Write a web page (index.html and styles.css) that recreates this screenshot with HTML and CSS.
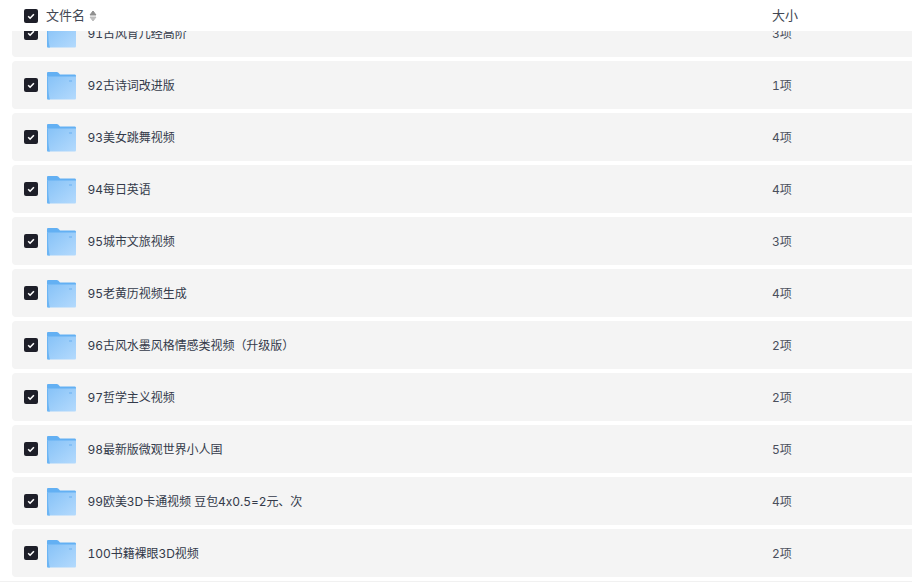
FILE: index.html
```html
<!DOCTYPE html>
<html lang="zh-CN">
<head>
<meta charset="utf-8">
<title>文件列表</title>
<link rel="stylesheet" href="styles.css">
</head>
<body>
<svg class="defs" width="0" height="0" aria-hidden="true">
  <defs>
    <linearGradient id="fg" x1="0" y1="0" x2="1" y2="1">
      <stop offset="0" stop-color="#86c2f7"/>
      <stop offset="1" stop-color="#b4dafd"/>
    </linearGradient>
    <symbol id="folder" viewBox="0 0 30 30">
      <path d="M1 3.2C1 2.5 1.5 2 2.2 2h8.6c.6 0 1 .2 1.4.6L14 4.4h14.6c.8 0 1.4.6 1.4 1.4V9H1z" fill="#63b0f3"/>
      <path d="M1 6.6h29v21.6c0 .7-.6 1.3-1.3 1.3H2.3c-.7 0-1.3-.6-1.3-1.3z" fill="url(#fg)"/>
      <path d="M1 7v21.2c0 .7.6 1.3 1.3 1.3H4C2.5 26 2 16 2 7z" fill="#6cb5f4"/>
      <rect x="23" y="10" width="3" height="2" fill="#84bff5"/>
    </symbol>
    <symbol id="check" viewBox="0 0 14 14">
      <rect width="14" height="14" rx="2" fill="#1e1f29"/>
      <path d="M4.2 7.3l1.9 1.9 3.8-4" fill="none" stroke="#fff" stroke-width="1.6"/>
    </symbol>
  </defs>
</svg>
<div class="page">
  <header class="head">
    <svg class="box"><use href="#check"/></svg>
    <span class="head-name">文件名</span>
    <svg class="sort" viewBox="0 0 8 12"><path d="M4 1L7 5H1z" fill="#8f8f8f" stroke="#8f8f8f" stroke-linejoin="round"/><path d="M4 11L1 7h6z" fill="#bdbdbd" stroke="#bdbdbd" stroke-linejoin="round"/></svg>
    <span class="head-size">大小</span>
  </header>
  <div class="viewport">
    <ul class="list">
      <li class="row"><svg class="box"><use href="#check"/></svg><svg class="folder"><use href="#folder"/></svg><span class="name">91古风育儿经高阶</span><span class="size">3项</span></li>
      <li class="row"><svg class="box"><use href="#check"/></svg><svg class="folder"><use href="#folder"/></svg><span class="name">92古诗词改进版</span><span class="size">1项</span></li>
      <li class="row"><svg class="box"><use href="#check"/></svg><svg class="folder"><use href="#folder"/></svg><span class="name">93美女跳舞视频</span><span class="size">4项</span></li>
      <li class="row"><svg class="box"><use href="#check"/></svg><svg class="folder"><use href="#folder"/></svg><span class="name">94每日英语</span><span class="size">4项</span></li>
      <li class="row"><svg class="box"><use href="#check"/></svg><svg class="folder"><use href="#folder"/></svg><span class="name">95城市文旅视频</span><span class="size">3项</span></li>
      <li class="row"><svg class="box"><use href="#check"/></svg><svg class="folder"><use href="#folder"/></svg><span class="name">95老黄历视频生成</span><span class="size">4项</span></li>
      <li class="row"><svg class="box"><use href="#check"/></svg><svg class="folder"><use href="#folder"/></svg><span class="name">96古风水墨风格情感类视频（升级版）</span><span class="size">2项</span></li>
      <li class="row"><svg class="box"><use href="#check"/></svg><svg class="folder"><use href="#folder"/></svg><span class="name">97哲学主义视频</span><span class="size">2项</span></li>
      <li class="row"><svg class="box"><use href="#check"/></svg><svg class="folder"><use href="#folder"/></svg><span class="name">98最新版微观世界小人国</span><span class="size">5项</span></li>
      <li class="row"><svg class="box"><use href="#check"/></svg><svg class="folder"><use href="#folder"/></svg><span class="name">99欧美3D卡通视频 豆包4x0.5=2元、次</span><span class="size">4项</span></li>
      <li class="row"><svg class="box"><use href="#check"/></svg><svg class="folder"><use href="#folder"/></svg><span class="name">100书籍裸眼3D视频</span><span class="size">2项</span></li>
    </ul>
  </div>
  <div class="foot"></div>
</div>
</body>
</html>
```
FILE: styles.css
```css
* { box-sizing: border-box; }
html, body { margin: 0; height: 100%; overflow: hidden; background: #fff; }
body { font-family: Inter, "Noto Sans CJK SC", sans-serif; font-variant-numeric: tabular-nums; color: #333a4a; }
.defs { position: absolute; }
.page { height: 585px; display: flex; flex-direction: column; }
.head { flex: none; height: 31px; display: flex; align-items: center; padding-left: 24px; font-size: 13px; line-height: 18px; color: #424753; }
.head-name { margin-left: 8px; padding-bottom: 1px; }
.sort { width: 8px; height: 12px; margin-left: 4px; }
.head-size { margin-left: auto; width: 140px; padding-bottom: 1px; }
.box { flex: none; width: 14px; height: 14px; }
.viewport { flex: none; height: 550px; padding-left: 12px; overflow: hidden; }
.list { list-style: none; margin: -22px -4px 0 0; padding: 0; display: flex; flex-direction: column; gap: 4px; }
.row { flex: none; height: 48px; display: flex; align-items: center; padding-left: 12px; background: #f4f4f4; border-radius: 4px; font-size: 12px; line-height: 16px; letter-spacing: -0.05px; }
.folder { flex: none; width: 30px; height: 30px; margin-left: 7.5px; }
.name { margin-left: 12px; padding-top: 2px; }
.size { margin-left: auto; width: 144px; padding-top: 2px; color: #4a4f5c; }
.foot { flex: none; height: 1px; background: #f1f1f1; }
```
